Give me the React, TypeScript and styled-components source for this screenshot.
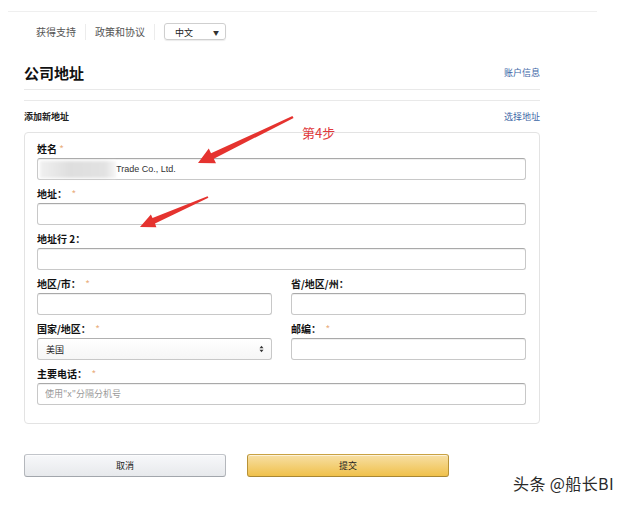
import React from "react";
import styled, { createGlobalStyle } from "styled-components";

const GlobalStyle = createGlobalStyle`
  html, body { margin: 0; padding: 0; background: #fff; }
  body { font-family: "Liberation Sans", "Noto Sans CJK SC", Arial, sans-serif; color: #111; }
  * { box-sizing: border-box; }
`;

const Page = styled.div`
  position: relative;
  width: 628px;
  height: 506px;
  overflow: hidden;
  background: #fff;
`;

const TopRule = styled.div`
  margin: 11px 31px 0 8px;
  border-top: 1px solid #efefef;
`;

const Main = styled.div`
  padding: 0 88px 0 24px;
`;

const Nav = styled.nav`
  display: flex;
  align-items: center;
  height: 17px;
  margin-top: 11px;
  padding-left: 12px;
`;

const NavLink = styled.span`
  font-size: 10px;
  line-height: 17px;
  color: #555;
  font-family: "Noto Sans CJK SC", sans-serif;
`;

const NavSep = styled.span`
  width: 1px;
  height: 16px;
  background: #ececec;
  margin: 0 9px;
`;

const LangBox = styled.div`
  width: 62px;
  height: 17px;
  display: flex;
  align-items: center;
  justify-content: space-between;
  padding: 1px 6px 0 10px;
  border: 1px solid #cfcfcf;
  border-radius: 3px;
  box-shadow: 0 1px 1px rgba(0, 0, 0, 0.08);
  font-size: 9px;
  color: #222;
  font-family: "Noto Sans CJK SC", sans-serif;
`;

const TinyCaret = styled.span`
  font-size: 6px;
  color: #333;
`;

const SpreadRow = styled.div<{ $mt: number }>`
  display: flex;
  justify-content: space-between;
  align-items: center;
  margin-top: ${(p) => p.$mt}px;
`;

const Title = styled.h1`
  margin: 0;
  font-size: 15px;
  line-height: 20px;
  font-weight: 700;
  color: #111;
  font-family: "Noto Sans CJK SC", sans-serif;
`;

const BlueLink = styled.a`
  font-size: 9px;
  line-height: 14px;
  color: #3c66a6;
  text-decoration: none;
  font-family: "Noto Sans CJK SC", sans-serif;
`;

const Divider = styled.div`
  margin-top: 6px;
  height: 12px;
  border-top: 1px solid #e9e9e9;
  border-bottom: 1px solid #e9e9e9;
`;

const SubTitle = styled.h2`
  margin: 0;
  font-size: 9px;
  line-height: 14px;
  font-weight: 700;
  color: #222;
  font-family: "Noto Sans CJK SC", sans-serif;
`;

const FormBox = styled.div`
  margin-top: 8px;
  border: 1px solid #e3e3e3;
  border-radius: 4px;
  padding: 9px 13px 18px 12px;
  display: flex;
  flex-direction: column;
  gap: 7px;
`;

const TwoCol = styled.div`
  display: grid;
  grid-template-columns: 1fr 1fr;
  column-gap: 19px;
  row-gap: 7px;
`;

const Field = styled.div`
  display: flex;
  flex-direction: column;
`;

const Label = styled.label`
  font-size: 10px;
  line-height: 13px;
  margin-bottom: 3px;
  font-weight: 700;
  color: #111;
  font-family: "Noto Sans CJK SC", sans-serif;
  white-space: pre;
`;

const Req = styled.span`
  color: #eab07f;
  font-weight: 400;
`;

const InputWrap = styled.div`
  position: relative;
`;

const TextInput = styled.input<{ $pl?: number }>`
  display: block;
  width: 100%;
  height: 22px;
  margin: 0;
  padding: 0 7px 0 ${(p) => p.$pl ?? 7}px;
  border: 1px solid #c8c8c8;
  border-top-color: #a9a9a9;
  border-radius: 3px;
  background: #fff;
  box-shadow: inset 0 1px 0 rgba(0, 0, 0, 0.06);
  font-size: 9px;
  color: #333;
  font-family: "Liberation Sans", "Noto Sans CJK SC", sans-serif;
  outline: none;
  &::placeholder {
    color: #9a9a9a;
    font-family: "Noto Sans CJK SC", sans-serif;
  }
`;

const Redaction = styled.span`
  position: absolute;
  left: 3px;
  top: 3px;
  width: 76px;
  height: 17px;
  background: linear-gradient(to right, #f0f0f0, #dedede 40%, #e2e2e2 85%, #f6f6f6);
  filter: blur(1.5px);
`;

const SelectBox = styled.div`
  height: 22px;
  display: flex;
  align-items: center;
  justify-content: space-between;
  padding: 0 7px 0 8px;
  border: 1px solid #c8c8c8;
  border-top-color: #b0b0b0;
  border-radius: 3px;
  background: linear-gradient(to bottom, #ffffff, #f6f6f6);
  font-size: 9px;
  color: #222;
  font-family: "Noto Sans CJK SC", sans-serif;
`;

const Buttons = styled.div`
  display: flex;
  gap: 21px;
  margin-top: 30px;
`;

const Button = styled.button<{ $primary?: boolean }>`
  width: 202px;
  height: 23px;
  margin: 0;
  padding: 0;
  border: 1px solid;
  border-radius: 3px;
  font-size: 9px;
  color: #222;
  font-family: "Noto Sans CJK SC", sans-serif;
  cursor: pointer;
  background: ${(p) =>
    p.$primary
      ? "linear-gradient(to bottom, #f7dfa5, #f0c14b)"
      : "linear-gradient(to bottom, #f7f8fa, #e7e9ec)"};
  border-color: ${(p) =>
    p.$primary ? "#c9a243 #b89236 #a88734" : "#c2c5ca #b4b7bc #a2a6ac"};
  box-shadow: inset 0 1px 0 rgba(255, 255, 255, 0.6);
`;

const Watermark = styled.div`
  position: absolute;
  left: 513px;
  top: 474px;
  font-size: 16px;
  line-height: 18px;
  letter-spacing: 0.4px;
  color: #2a2a2a;
  font-family: "Noto Sans CJK SC", sans-serif;
  text-shadow: 0 0 2px #fff;
  white-space: nowrap;
`;

const Annotation = styled.svg`
  position: absolute;
  left: 0;
  top: 0;
  pointer-events: none;
`;

const StepLabel = styled.div`
  position: absolute;
  left: 302px;
  top: 124px;
  font-size: 13px;
  line-height: 18px;
  color: #e0393c;
  font-family: "Noto Sans CJK SC", sans-serif;
`;

const UpDown = () => (
  <svg width="5" height="8" viewBox="0 0 5 8">
    <path d="M0.5 3.2 L2.5 0.8 L4.5 3.2 Z" fill="#333" />
    <path d="M0.5 4.8 L2.5 7.2 L4.5 4.8 Z" fill="#333" />
  </svg>
);

const star = "  *";

export default function App() {
  return (
    <Page>
      <GlobalStyle />
      <TopRule />
      <Main>
        <Nav>
          <NavLink>获得支持</NavLink>
          <NavSep />
          <NavLink>政策和协议</NavLink>
          <NavSep />
          <LangBox>
            <span>中文</span>
            <TinyCaret>▼</TinyCaret>
          </LangBox>
        </Nav>

        <SpreadRow $mt={23}>
          <Title>公司地址</Title>
          <BlueLink href="#">账户信息</BlueLink>
        </SpreadRow>

        <Divider />

        <SpreadRow $mt={9}>
          <SubTitle>添加新地址</SubTitle>
          <BlueLink href="#">选择地址</BlueLink>
        </SpreadRow>

        <FormBox>
          <Field>
            <Label>
              姓名<Req> *</Req>
            </Label>
            <InputWrap>
              <TextInput $pl={78} defaultValue="Trade Co., Ltd." />
              <Redaction />
            </InputWrap>
          </Field>
          <Field>
            <Label>
              地址：<Req>{star}</Req>
            </Label>
            <TextInput />
          </Field>
          <Field>
            <Label>地址行 2：</Label>
            <TextInput />
          </Field>
          <TwoCol>
            <Field>
              <Label>
                地区/市：<Req>{star}</Req>
              </Label>
              <TextInput />
            </Field>
            <Field>
              <Label>省/地区/州：</Label>
              <TextInput />
            </Field>
            <Field>
              <Label>
                国家/地区：<Req>{star}</Req>
              </Label>
              <SelectBox>
                <span>美国</span>
                <UpDown />
              </SelectBox>
            </Field>
            <Field>
              <Label>
                邮编：<Req>{star}</Req>
              </Label>
              <TextInput />
            </Field>
          </TwoCol>
          <Field>
            <Label>
              主要电话：<Req>{star}</Req>
            </Label>
            <TextInput placeholder={'使用"x"分隔分机号'} />
          </Field>
        </FormBox>

        <Buttons>
          <Button>取消</Button>
          <Button $primary>提交</Button>
        </Buttons>
      </Main>

      <Annotation width="628" height="506" viewBox="0 0 628 506">
        <polygon
          points="293.6,117.9 213.8,158.7 216.0,163.2 198,163 208.8,148.6 211.0,153.3 292.4,116.1"
          fill="#e5332f"
        />
        <polygon
          points="208.4,197.7 155.0,223.6 156.4,227.3 140,227 150.9,214.4 152.5,218.1 207.6,196.3"
          fill="#e5332f"
        />
      </Annotation>
      <StepLabel>第4步</StepLabel>

      <Watermark>头条 @船长BI</Watermark>
    </Page>
  );
}
